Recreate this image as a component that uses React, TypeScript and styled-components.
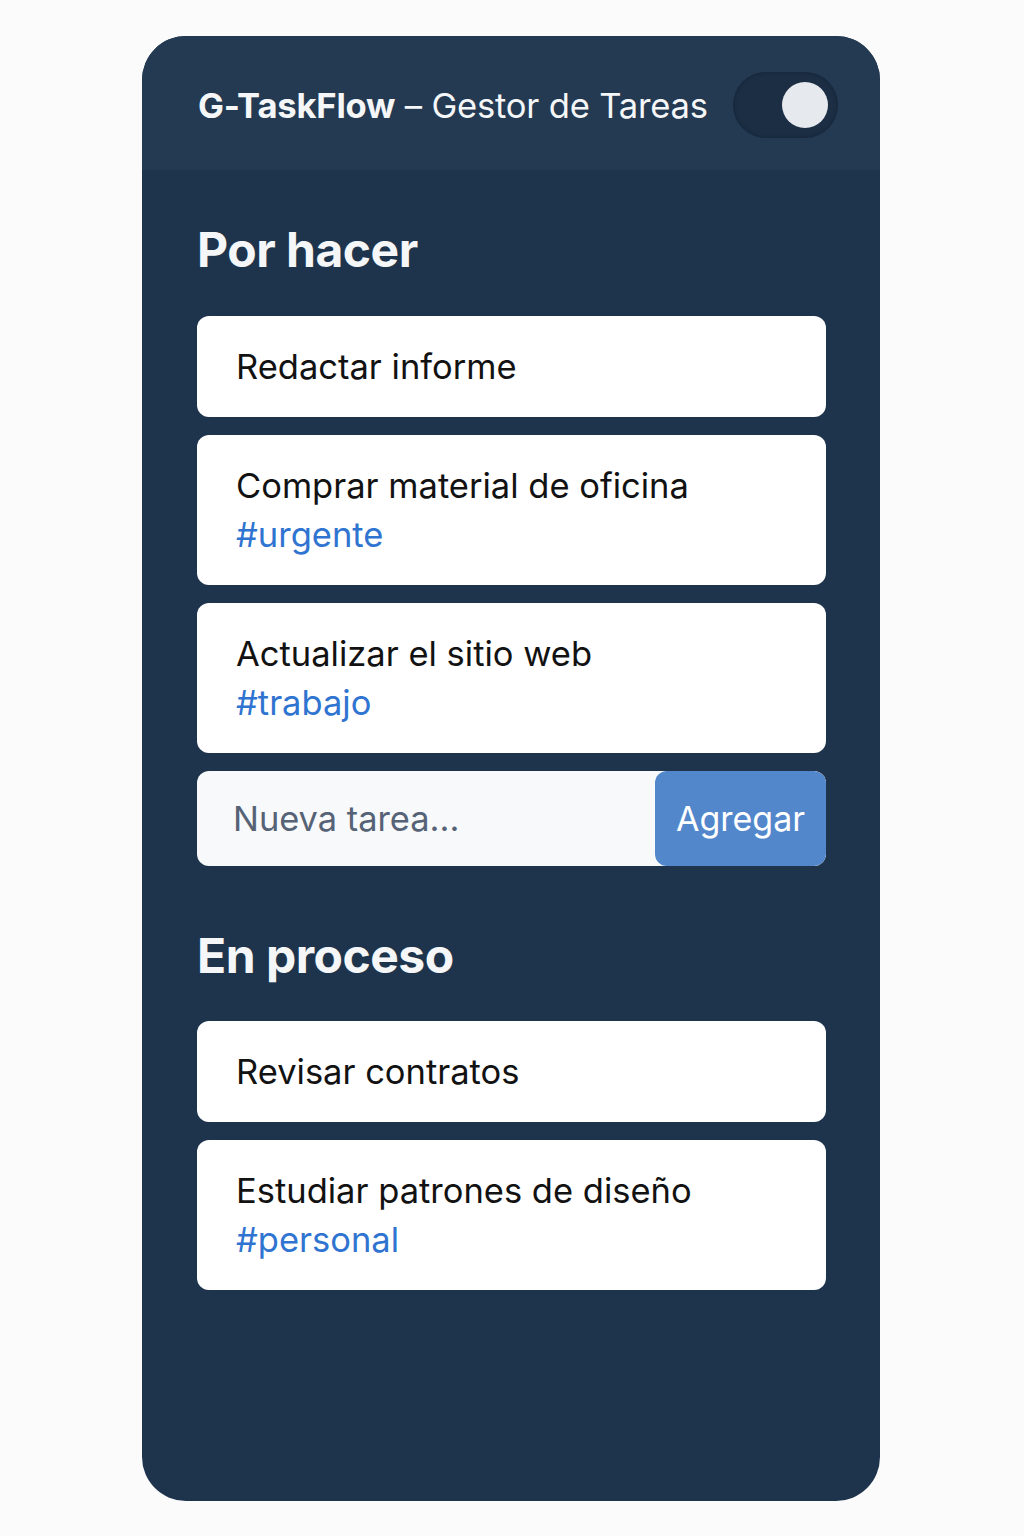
import React, { useState } from "react";
import styled, { createGlobalStyle } from "styled-components";

const GlobalStyle = createGlobalStyle`
  body {
    margin: 0;
    background: #fbfbfb;
    font-family: Inter, "Noto Sans", Roboto, sans-serif;
  }
`;

const Page = styled.div`
  display: flex;
  justify-content: center;
  padding: 36px 2px 34px 0;
`;

const Panel = styled.div`
  width: 738px;
  min-height: 1465px;
  border-radius: 44px;
  background: #1e344c;
  overflow: hidden;
  display: flex;
  flex-direction: column;
`;

const Header = styled.header`
  height: 134px;
  box-sizing: border-box;
  background: #243a52;
  display: flex;
  align-items: center;
  justify-content: space-between;
  padding: 4px 42px 0 56px;
`;

const Title = styled.h1`
  margin: 0;
  font-size: 34.6px;
  font-weight: 400;
  color: #f4f6f8;
  letter-spacing: -0.2px;

  strong {
    font-weight: 700;
  }
`;

const Toggle = styled.button<{ on: boolean }>`
  width: 105px;
  height: 66px;
  border: none;
  border-radius: 33px;
  background: #1b2e44;
  box-shadow: inset 0 0 4px rgba(0, 0, 0, 0.25);
  padding: 10px;
  display: flex;
  justify-content: ${(p) => (p.on ? "flex-end" : "flex-start")};
  align-items: center;
  cursor: pointer;
`;

const Knob = styled.span`
  width: 46px;
  height: 46px;
  border-radius: 50%;
  background: #e6e9ed;
`;

const Body = styled.main`
  padding: 51px 54px 40px 55px;
  display: flex;
  flex-direction: column;
  gap: 61px;
`;

const Section = styled.section`
  display: flex;
  flex-direction: column;
  gap: 18px;
`;

const Heading = styled.h2`
  margin: 0 0 19px;
  font-size: 48px;
  font-weight: 700;
  color: #f4f6f8;
  letter-spacing: -0.5px;
  line-height: 1.2;
`;

const Card = styled.div`
  background: #fff;
  border-radius: 12px;
  padding: 26px 39px;
  display: flex;
  flex-direction: column;
  justify-content: center;
  font-size: 34.5px;
  line-height: 49px;
  color: #121212;
`;

const Tag = styled.span`
  color: #2f74d0;
`;

const AddRow = styled.form`
  display: flex;
  height: 95px;
  border-radius: 12px;
  overflow: hidden;
  background: #f8f9fa;
`;

const Input = styled.input`
  flex: 1;
  min-width: 0;
  border: none;
  background: transparent;
  padding: 0 36px;
  font-family: inherit;
  font-size: 34.4px;
  color: #222;
  outline: none;

  &::placeholder {
    color: #566275;
  }
`;

const AddButton = styled.button`
  width: 171px;
  border: none;
  border-radius: 12px;
  background: #5387cc;
  color: #fff;
  font-family: inherit;
  font-size: 34px;
  cursor: pointer;
`;

type Task = { title: string; tag?: string };

const todo: Task[] = [
  { title: "Redactar informe" },
  { title: "Comprar material de oficina", tag: "#urgente" },
  { title: "Actualizar el sitio web", tag: "#trabajo" },
];

const doing: Task[] = [
  { title: "Revisar contratos" },
  { title: "Estudiar patrones de diseño", tag: "#personal" },
];

const TaskCard = ({ task }: { task: Task }) => (
  <Card>
    <span>{task.title}</span>
    {task.tag && <Tag>{task.tag}</Tag>}
  </Card>
);

const App = () => {
  const [dark, setDark] = useState(true);
  const [value, setValue] = useState("");

  return (
    <>
      <GlobalStyle />
      <Page>
        <Panel>
          <Header>
            <Title>
              <strong>G-TaskFlow</strong> – Gestor de Tareas
            </Title>
            <Toggle on={dark} onClick={() => setDark(!dark)} aria-label="Tema">
              <Knob />
            </Toggle>
          </Header>
          <Body>
            <Section>
              <Heading>Por hacer</Heading>
              {todo.map((t) => (
                <TaskCard key={t.title} task={t} />
              ))}
              <AddRow onSubmit={(e) => e.preventDefault()}>
                <Input
                  placeholder="Nueva tarea..."
                  value={value}
                  onChange={(e) => setValue(e.target.value)}
                />
                <AddButton type="submit">Agregar</AddButton>
              </AddRow>
            </Section>
            <Section>
              <Heading>En proceso</Heading>
              {doing.map((t) => (
                <TaskCard key={t.title} task={t} />
              ))}
            </Section>
          </Body>
        </Panel>
      </Page>
    </>
  );
};

export default App;
